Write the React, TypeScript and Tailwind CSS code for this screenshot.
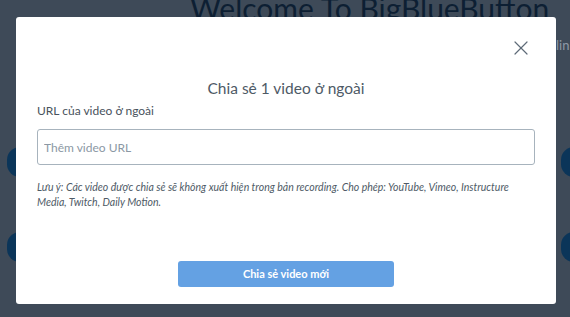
import { X } from 'lucide-react';

function Backdrop() {
  return (
    <div className="absolute inset-0 bg-[#3e4a58] overflow-hidden">
      <div className="absolute left-[190px] top-[-10px] text-[30px] leading-[36px] font-['Lato',sans-serif] text-[#0d1f33] whitespace-nowrap">
        Welcome To BigBlueButton
      </div>
      <div className="absolute left-[556px] top-[36px] text-[13px] text-[#8e99a6] font-['Lato',sans-serif]">lin</div>
      <div className="absolute left-[7px] top-[147px] w-[26px] h-[30px] rounded-full bg-[#0b3559]" />
      <div className="absolute left-[7px] top-[232px] w-[26px] h-[30px] rounded-full bg-[#0b3559]" />
      <div className="absolute left-[561px] top-[147px] w-[26px] h-[30px] rounded-full bg-[#0b3559]" />
      <div className="absolute left-[561px] top-[232px] w-[26px] h-[30px] rounded-full bg-[#0b3559]" />
    </div>
  );
}

export default function App() {
  return (
    <div className="relative w-[570px] h-[317px] overflow-hidden font-['Lato',sans-serif]">
      <Backdrop />
      <div className="absolute left-[16px] top-[17px] w-[540px] h-[287px] bg-white rounded-[3px] flex flex-col px-[21px]">
        <div className="flex justify-end pt-[19px] pr-[2px]">
          <X className="w-[24px] h-[24px] text-[#5e6b78]" strokeWidth={1.2} />
        </div>
        <h2 className="mt-[18px] text-center text-[15.5px] leading-[20px] text-[#4e5a66]">
          Chia sẻ 1 video ở ngoài
        </h2>
        <label className="mt-[5px] text-[12px] leading-[16px] text-[#48525c]">URL của video ở ngoài</label>
        <input
          className="mt-[10px] h-[36px] w-full border border-[#a7b3bd] rounded-[3px] px-[6px] text-[12px] placeholder:text-[#8b98a4] outline-none"
          placeholder="Thêm video URL"
        />
        <p className="mt-[15px] text-[10.5px] leading-[15px] italic text-[#4e5a66]">
          Lưu ý: Các video được chia sẻ sẽ không xuất hiện trong bản recording. Cho phép: YouTube, Vimeo, Instructure Media, Twitch, Daily Motion.
        </p>
        <div className="mt-auto mb-[17px] flex justify-center">
          <button className="w-[216px] h-[26px] rounded-[3px] bg-[#64a1e3] text-white text-[11px] font-bold">
            Chia sẻ video mới
          </button>
        </div>
      </div>
    </div>
  );
}
